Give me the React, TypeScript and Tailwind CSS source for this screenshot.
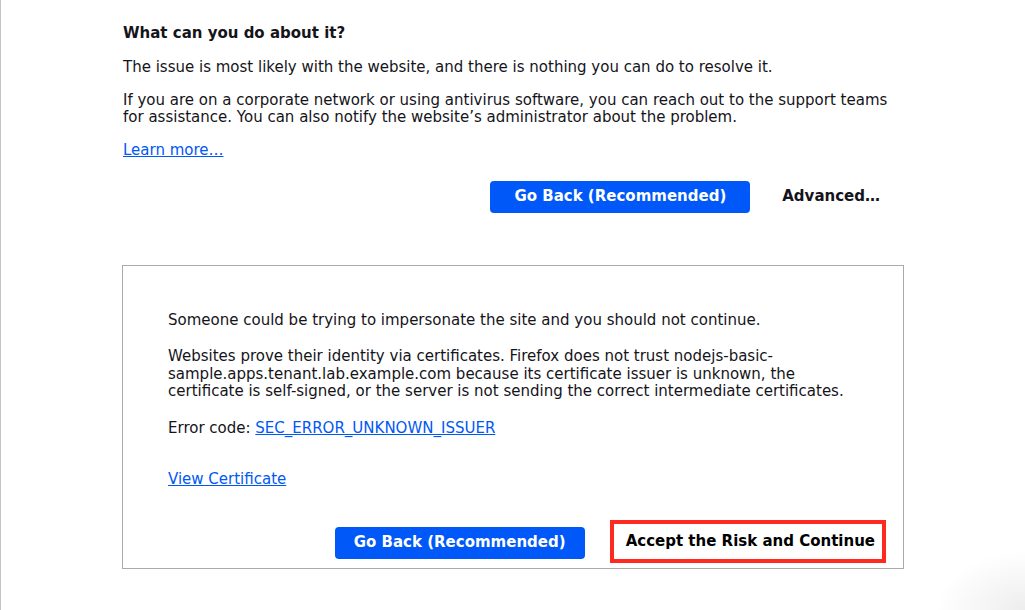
import React from 'react';

const font = { fontFamily: '"DejaVu Sans", Verdana, sans-serif' };

export default function App() {
  return (
    <div
      className="relative w-[1025px] h-[610px] overflow-hidden bg-white text-[#15141a] border-l border-[#c4c4c4]"
      style={font}
    >
      <div className="ml-[121px] w-[782px] pt-[24.5px] text-[15px] leading-[17.5px]">
        <div className="pl-[1px]">
          <h2 className="font-bold">What can you do about it?</h2>
          <p className="mt-[16.5px]">
            The issue is most likely with the website, and there is nothing you can do to resolve it.
          </p>
          <p className="mt-[15.5px] pr-[10px]">
            If you are on a corporate network or using antivirus software, you can reach out to the support teams for
            assistance. You can also notify the website’s administrator about the problem.
          </p>
          <p className="mt-[15.5px]">
            <a href="#" className="text-[#0058f5] underline">Learn more…</a>
          </p>
        </div>

        <div className="mt-[21.5px] flex justify-end gap-[8px]">
          <button className="h-[32px] px-[24px] rounded-[4px] bg-[#0058f8] text-white font-bold">
            Go Back (Recommended)
          </button>
          <button className="h-[32px] px-[24px] rounded-[4px] font-bold text-[#15141a]">
            Advanced…
          </button>
        </div>

        <div className="mt-[52px] border border-[#aaaaaa]">
          <div className="px-[45px] pt-[45.5px]">
            <p>Someone could be trying to impersonate the site and you should not continue.</p>
            <p className="mt-[19px]">
              Websites prove their identity via certificates. Firefox does not trust nodejs-basic-sample.apps.tenant.lab.example.com
              because its certificate issuer is unknown, the certificate is self-signed, or the server is not sending the
              correct intermediate certificates.
            </p>
            <p className="mt-[19px]">
              Error code: <a href="#" className="text-[#0058f5] underline">SEC_ERROR_UNKNOWN_ISSUER</a>
            </p>
            <p className="mt-[33.5px]">
              <a href="#" className="text-[#0058f5] underline">View Certificate</a>
            </p>
          </div>
          <div className="mt-[32px] pb-[5px] pr-[17px] flex justify-end items-center gap-[25px]">
            <button className="mt-[3px] h-[32px] w-[250px] rounded-[4px] bg-[#0058f8] text-white font-bold">
              Go Back (Recommended)
            </button>
            <button className="h-[43px] border-[4px] border-[#ff2a1f] bg-white pl-[12px] pr-[7px] font-bold text-black">
              Accept the Risk and Continue
            </button>
          </div>
        </div>
      </div>
      <div className="pointer-events-none absolute right-0 bottom-0 w-[90px] h-[60px] bg-[radial-gradient(ellipse_at_bottom_right,rgba(0,0,0,0.07),rgba(0,0,0,0)_70%)]" />
    </div>
  );
}
